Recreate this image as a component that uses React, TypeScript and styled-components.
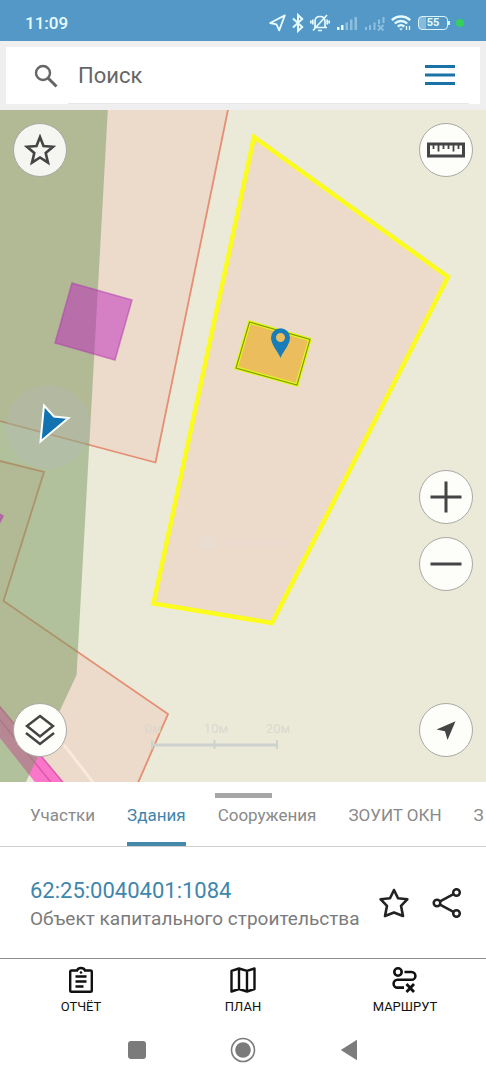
import React, { useState } from "react";
import styled, { createGlobalStyle } from "styled-components";

const GlobalStyle = createGlobalStyle`
  *, *::before, *::after { box-sizing: border-box; }
  body { margin: 0; background: #fff; font-family: Roboto, "Noto Sans", sans-serif; }
  button, input { font: inherit; margin: 0; }
  button { padding: 0; border: 0; background: none; cursor: pointer; color: inherit; }
  svg { display: block; flex: none; }
`;

const Screen = styled.div`
  min-height: 100vh;
  display: flex;
  flex-direction: column;
  background: #fff;
`;

const StatusBar = styled.div`
  height: 41px;
  flex: none;
  display: flex;
  align-items: center;
  justify-content: space-between;
  padding: 4px 22px 0 25px;
  background: #5398c6;
  color: #e6fbff;
`;

const Clock = styled.time`
  font-size: 17px;
  line-height: 24px;
  font-weight: 500;
`;

const StatusIcons = styled.div`
  display: flex;
  align-items: center;
  gap: 6px;
`;

const Battery = styled.div`
  position: relative;
  width: 30px;
  height: 14px;
  margin: 0 2px 0 1px;
  border: 1px solid #d9f3fc;
  border-radius: 4px;
  background: linear-gradient(90deg, #86bbdb 7px, transparent 7px);
  font-size: 11px;
  line-height: 12px;
  font-weight: 700;
  text-align: center;

  &::after {
    content: "";
    position: absolute;
    right: -3px;
    top: 4px;
    width: 2px;
    height: 4px;
    background: #d9f3fc;
  }
`;

const ActiveDot = styled.span`
  width: 8px;
  height: 8px;
  border-radius: 50%;
  background: #34d15c;
`;

const SearchArea = styled.header`
  flex: none;
  padding: 6px;
  background: #efefef;
`;

const SearchCard = styled.form`
  height: 57px;
  display: flex;
  align-items: center;
  padding: 0 11px 0 28px;
  background: #fff;
`;

const SearchLine = styled.div`
  flex: 1;
  align-self: stretch;
  display: flex;
  align-items: center;
  min-width: 0;
  margin-left: 10px;
  padding: 0 14px 0 10px;
  border-bottom: 1px solid #e8e8e8;
`;

const SearchInput = styled.input`
  flex: 1;
  min-width: 0;
  height: 32px;
  padding: 0;
  border: 0;
  outline: 0;
  background: transparent;
  font-size: 22px;
  color: #666;

  &::placeholder { color: #666; opacity: 1; }
`;

const MenuButton = styled.button`
  width: 30px;
  height: 32px;
  display: grid;
  place-items: center;
`;

const MapArea = styled.main`
  position: relative;
  flex: 1;
  min-height: 500px;
  background: #ebead8;
  overflow: hidden;
`;

const MapCanvas = styled.svg`
  position: absolute;
  inset: 0;
  width: 100%;
  height: 100%;
`;

const MapControls = styled.div`
  position: absolute;
  inset: 0;
  display: flex;
  justify-content: space-between;
  padding: 13px 13px 25px;
`;

const ControlColumn = styled.div`
  display: flex;
  flex-direction: column;
  justify-content: space-between;
`;

const ZoomGroup = styled.div`
  display: flex;
  flex-direction: column;
  gap: 13px;
  margin: auto 0 112px;
`;

const RoundButton = styled.button<{ $muted?: boolean }>`
  width: 54px;
  height: 54px;
  display: grid;
  place-items: center;
  border: 1px solid #a9a9a4;
  border-radius: 50%;
  background: ${(p) => (p.$muted ? "#f5f5f2" : "#fdfdfa")};
  color: #444;
`;

const Sheet = styled.section`
  flex: none;
  padding-top: 11px;
`;

const Handle = styled.div`
  width: 57px;
  height: 5px;
  margin: 0 auto;
  background: #a6a6a6;
`;

const Tabs = styled.div`
  display: flex;
  gap: 32px;
  padding: 5px 0 0 30px;
  overflow: hidden;
  border-bottom: 1px solid #cfcfcf;
`;

const Tab = styled.button<{ $active: boolean }>`
  flex: none;
  padding-bottom: 15px;
  border-bottom: 4px solid ${(p) => (p.$active ? "#4488aa" : "transparent")};
  font-size: 17px;
  line-height: 24px;
  white-space: nowrap;
  color: ${(p) => (p.$active ? "#3f86ac" : "#8a8a8a")};
`;

const Result = styled.article`
  display: flex;
  align-items: flex-start;
  justify-content: space-between;
  padding: 30px 24px 26px 30px;
`;

const ResultText = styled.div`
  min-width: 0;
`;

const ResultNumber = styled.h2`
  margin: 0;
  font-size: 22px;
  line-height: 28px;
  font-weight: 400;
  color: #3f86ac;
`;

const ResultKind = styled.p`
  margin: 0;
  font-size: 19px;
  line-height: 27px;
  color: #7b7b7b;
  white-space: nowrap;
`;

const ResultActions = styled.div`
  display: flex;
  flex: none;
  gap: 23px;
  padding-top: 11px;
  color: #222;
`;

const BottomNav = styled.nav`
  flex: none;
  display: grid;
  grid-template-columns: repeat(3, 1fr);
  border-top: 1px solid #8c8c8c;
`;

const NavButton = styled.button`
  display: flex;
  flex-direction: column;
  align-items: center;
  gap: 4px;
  padding: 7px 0 4px;
  font-size: 13px;
  line-height: 18px;
  color: #111;
`;

const SystemBar = styled.footer`
  flex: none;
  height: 60px;
  display: flex;
  align-items: center;
  justify-content: center;
  gap: 80px;
  color: #7b7b7b;
`;

const SystemButton = styled.button`
  width: 26px;
  height: 26px;
  display: grid;
  place-items: center;
`;

const StarIcon = () => (
  <svg width="32" height="32" viewBox="0 0 32 32" fill="none" stroke="currentColor" strokeWidth="2.6">
    <path d="M16 3 19.500 12 29 12.800 21.700 19 24 28.600 16 23.500 8 28.600 10.300 19 3 12.800 12.500 12Z" />
  </svg>
);

const SoftStarIcon = () => (
  <svg width="30" height="30" viewBox="0 0 30 30" fill="none" stroke="currentColor" strokeWidth="2.6" strokeLinejoin="round">
    <path d="M15 2 19 10.200 28.300 11.300 22 17.800 24 28 15 24.500 6 28 8 17.800 1.700 11.300 11 10.200Z" />
  </svg>
);

const StatusGlyphs = () => (
  <StatusIcons>
    <svg width="17" height="20" viewBox="0 0 17 20" fill="none" stroke="currentColor" strokeWidth="1.8" strokeLinejoin="round">
      <path d="M15.8 2.4 1.2 10l6.3 1.4 2.7 6Z" />
    </svg>
    <svg width="12" height="20" viewBox="0 0 12 20" fill="none" stroke="currentColor" strokeWidth="2">
      <path d="m1 5.6 9.2 8.4L6 18V2l4.2 4L1 14.4" />
    </svg>
    <svg width="20" height="20" viewBox="0 0 20 20" fill="none" stroke="currentColor" strokeWidth="1.7">
      <path d="M5 14V8.500C5 5 7 3.500 10 3.500S15 5 15 8.500V14M4 14.500h13M8 17.500h4M17 2 3 17.500M2.800 6.500v5M.8 7.500v3M17.200 6.500v5M19.200 7.500v3" />
    </svg>
    <svg width="22" height="20" viewBox="0 0 22 20" fill="currentColor">
      <path d="M1 14h2.500v3H1zM5 12h2.500v5H5z" />
      <path opacity=".4" d="M9.500 9.500H12V17H9.500zM14 6.500h2.500V17H14zM18.500 4H21v13h-2.500z" />
    </svg>
    <svg width="21" height="20" viewBox="0 0 21 20" fill="currentColor" opacity=".4">
      <path d="M1 14h2v3H1zM5 12h2v5H5zM9.500 9.500h2V17h-2zM14 6.500h2V11h-2zM18.500 4h2v6h-2z" />
      <path d="m14 12 5.500 5.500M19.500 12 14 17.500" stroke="currentColor" strokeWidth="1.8" />
    </svg>
    <svg width="20" height="20" viewBox="0 0 20 20" fill="none" stroke="currentColor" strokeWidth="2.400">
      <path d="M.8 7.200C6 2.300 14 2.300 19.200 7.200M3.800 10.500c3.500-3.300 8.900-3.300 12.400 0M6.800 13.600c1.800-1.800 4.600-1.800 6.400 0" />
      <path d="M8.200 15.500h3.600L10 17.500Z" fill="currentColor" stroke="none" />
      <path d="M15.500 13v4M18.500 13v4" strokeWidth="1.300" />
    </svg>
    <Battery>55</Battery>
    <ActiveDot />
  </StatusIcons>
);

const CadastralMap = () => (
  <MapCanvas viewBox="0 110 486 672" preserveAspectRatio="xMidYMid slice" role="img" aria-label="Карта участков">
    <rect y="110" width="486" height="672" fill="#ebead8" />
    <g fill="#ecdaca" stroke="#e58e74" strokeWidth="1.8">
      <path d="M-4 100H230L155.500 462.500-4 420Z" />
      <path d="M-4 460 44 472 3.500 601 168 714 134 792H58L-4 716Z" />
    </g>
    <path d="M64 745 96 786" stroke="#faeadb" strokeWidth="3" />
    <path d="M-4 702 66 786H38L-4 733Z" fill="#fa76c8" />
    <path d="M-4 702 66 786M-4 715 54 786" fill="none" stroke="#dd58ac" strokeWidth="1.500" />
    <path d="M-4 106H108L76.500 675 62 706 24 786H-4Z" fill="rgb(117,152,96)" fillOpacity=".5" />
    <circle cx="48" cy="427" r="42" fill="#b5bbb8" fillOpacity=".3" />
    <g fill="#be24be" fillOpacity=".5" stroke="#b03cae" strokeOpacity=".5" strokeWidth="1.600">
      <path d="m72 283 60 17-17 60-60-17Z" />
      <path d="m-5 511 8 5-4 8-6 2Z" />
    </g>
    <path d="M254 137 448 277 272 623 153.500 603.500Z" fill="#ecdaca" stroke="#fbfb1e" strokeWidth="4.500" />
    <path d="m249.500 322 60.500 17.500-13 45.500-61-17Z" fill="#ebbd5d" stroke="#e6f71c" strokeWidth="3.500" />
    <path d="m249.500 322 60.500 17.500-13 45.500-61-17Z" fill="none" stroke="#7f9c0c" strokeWidth="1.200" />
    <path
      d="M280.500 358c-1.500-5-9.500-13-9.500-20.200a9.500 9.500 0 0 1 19 0c0 7.200-8 15.200-9.500 20.200ZM280.500 342a4.500 4.500 0 1 0 0-9 4.500 4.500 0 0 0 0 9Z"
      fill="#187db8"
      fillRule="evenodd"
    />
    <path d="M44 405.500 54 416.500 68.500 418 40.500 441.500Z" fill="#1173b2" stroke="#fff" strokeWidth="2" />
    <g fill="#e9dcd0">
      <rect x="200" y="536" width="16" height="14" rx="3" />
      <rect x="224" y="538" width="62" height="8" rx="3" opacity=".6" />
    </g>
    <g fill="none" stroke="#cdd2cf">
      <path d="M152 745H277" strokeWidth="3" />
      <path d="M152 740v9M214.500 740v9M277 740v9" strokeWidth="2" />
    </g>
    <g fill="#dad9ce" fontSize="13" textAnchor="middle">
      <text x="153" y="733">0м</text>
      <text x="216" y="733">10м</text>
      <text x="278" y="733">20м</text>
    </g>
  </MapCanvas>
);

const TABS = ["Участки", "Здания", "Сооружения", "ЗОУИТ ОКН", "З"];

export default function App() {
  const [tab, setTab] = useState("Здания");

  return (
    <Screen>
      <GlobalStyle />
      <StatusBar>
        <Clock>11:09</Clock>
        <StatusGlyphs />
      </StatusBar>

      <SearchArea>
        <SearchCard role="search" onSubmit={(e) => e.preventDefault()}>
          <svg width="24" height="24" viewBox="0 0 24 24" fill="none" stroke="#666" strokeWidth="2.400">
            <circle cx="9" cy="9" r="7" />
            <path d="m14 14 8.500 8.500" strokeWidth="3" />
          </svg>
          <SearchLine>
            <SearchInput type="text" placeholder="Поиск" aria-label="Поиск" />
            <MenuButton type="button" aria-label="Меню">
              <svg width="30" height="20" viewBox="0 0 30 20" fill="#1b72a6">
                <path d="M0 0h30v3H0zM0 8.500h30v3H0zM0 17h30v3H0z" />
              </svg>
            </MenuButton>
          </SearchLine>
        </SearchCard>
      </SearchArea>

      <MapArea>
        <CadastralMap />
        <MapControls>
          <ControlColumn>
            <RoundButton $muted type="button" aria-label="Избранное">
              <StarIcon />
            </RoundButton>
            <RoundButton type="button" aria-label="Слои">
              <svg width="32" height="32" viewBox="0 0 32 32" fill="none" stroke="currentColor" strokeWidth="2.500">
                <path d="M16 2 29 12 16 22.500 3 12Z" />
                <path d="M2 19 16 30 30 19" />
              </svg>
            </RoundButton>
          </ControlColumn>
          <ControlColumn>
            <RoundButton type="button" aria-label="Линейка">
              <svg width="38" height="16" viewBox="0 0 38 16" fill="none" stroke="currentColor">
                <rect x="1.500" y="2" width="35" height="12" strokeWidth="3" />
                <path d="M6.500 3v4M11.500 3v6.500M16.500 3v4M21.500 3v4M26.500 3v6.500M31.500 3v4" strokeWidth="1.800" />
              </svg>
            </RoundButton>
            <ZoomGroup>
              <RoundButton type="button" aria-label="Приблизить">
                <svg width="32" height="32" viewBox="0 0 32 32" stroke="currentColor" strokeWidth="3">
                  <path d="M.5 16h31M16 .5v31" />
                </svg>
              </RoundButton>
              <RoundButton type="button" aria-label="Отдалить">
                <svg width="32" height="32" viewBox="0 0 32 32" stroke="currentColor" strokeWidth="3">
                  <path d="M.5 16h31" />
                </svg>
              </RoundButton>
            </ZoomGroup>
            <RoundButton type="button" aria-label="Моё местоположение">
              <svg width="20" height="20" viewBox="0 0 20 20" fill="currentColor">
                <path d="M19.500 1.200.5 9.500 9 11.200 11.500 20Z" />
              </svg>
            </RoundButton>
          </ControlColumn>
        </MapControls>
      </MapArea>

      <Sheet>
        <Handle />
        <Tabs role="tablist">
          {TABS.map((name) => (
            <Tab key={name} role="tab" type="button" aria-selected={name === tab} $active={name === tab} onClick={() => setTab(name)}>
              {name}
            </Tab>
          ))}
        </Tabs>
        <Result>
          <ResultText>
            <ResultNumber>62:25:0040401:1084</ResultNumber>
            <ResultKind>Объект капитального строительства</ResultKind>
          </ResultText>
          <ResultActions>
            <button type="button" aria-label="В избранное">
              <SoftStarIcon />
            </button>
            <button type="button" aria-label="Поделиться">
              <svg width="30" height="30" viewBox="0 0 30 30" fill="none" stroke="currentColor" strokeWidth="2.500">
                <circle cx="5" cy="15" r="3.300" />
                <circle cx="24.500" cy="4.500" r="3.300" />
                <circle cx="24.500" cy="25.500" r="3.300" />
                <path d="M8 13.400 21.500 6.200M8 16.600 21.500 23.800" />
              </svg>
            </button>
          </ResultActions>
        </Result>
      </Sheet>

      <BottomNav>
        <NavButton type="button">
          <svg width="28" height="28" viewBox="0 0 28 28" fill="none" stroke="currentColor" strokeWidth="2.400">
            <path d="M10 4.500H4.500Q3.200 4.500 3.200 5.800V24.500Q3.200 25.800 4.500 25.800H23.500Q24.800 25.800 24.800 24.500V5.800Q24.800 4.500 23.500 4.500H18Q17 2 14 2T10 4.500Z" />
            <path d="M8.500 10.500h11M8.500 15.500h11M8.500 20.500h8" />
            <circle cx="14" cy="6.500" r="1.300" fill="currentColor" stroke="none" />
          </svg>
          ОТЧЁТ
        </NavButton>
        <NavButton type="button">
          <svg width="28" height="28" viewBox="0 0 28 28" fill="none" stroke="currentColor" strokeWidth="2.400" strokeLinejoin="round">
            <path d="M2.500 4.800 10 2.500 18 4.800 25.500 2.500V23L18 25.500 10 23 2.500 25.500ZM10 2.500V23M18 4.800V25.500" />
          </svg>
          ПЛАН
        </NavButton>
        <NavButton type="button">
          <svg width="28" height="28" viewBox="0 0 28 28" fill="none" stroke="currentColor" strokeWidth="2.600">
            <circle cx="7" cy="6" r="3.700" />
            <path d="M13.500 6h7a3.900 3.900 0 0 1 0 7.800H6.500a3.900 3.900 0 0 0 0 7.800h6.500" />
            <path d="m15.500 18 7.500 8M23 18l-7.500 8" strokeWidth="2.800" />
          </svg>
          МАРШРУТ
        </NavButton>
      </BottomNav>

      <SystemBar>
        <SystemButton type="button" aria-label="Недавние">
          <svg width="18" height="18" viewBox="0 0 18 18" fill="currentColor">
            <rect width="18" height="18" rx="3" />
          </svg>
        </SystemButton>
        <SystemButton type="button" aria-label="Домой">
          <svg width="26" height="26" viewBox="0 0 26 26">
            <circle cx="13" cy="13" r="11.500" fill="none" stroke="currentColor" strokeWidth="1.600" />
            <circle cx="13" cy="13" r="7.800" fill="currentColor" />
          </svg>
        </SystemButton>
        <SystemButton type="button" aria-label="Назад">
          <svg width="18" height="22" viewBox="0 0 18 22" fill="currentColor">
            <path d="M17 .8V21.200L.8 11Z" />
          </svg>
        </SystemButton>
      </SystemBar>
    </Screen>
  );
}
